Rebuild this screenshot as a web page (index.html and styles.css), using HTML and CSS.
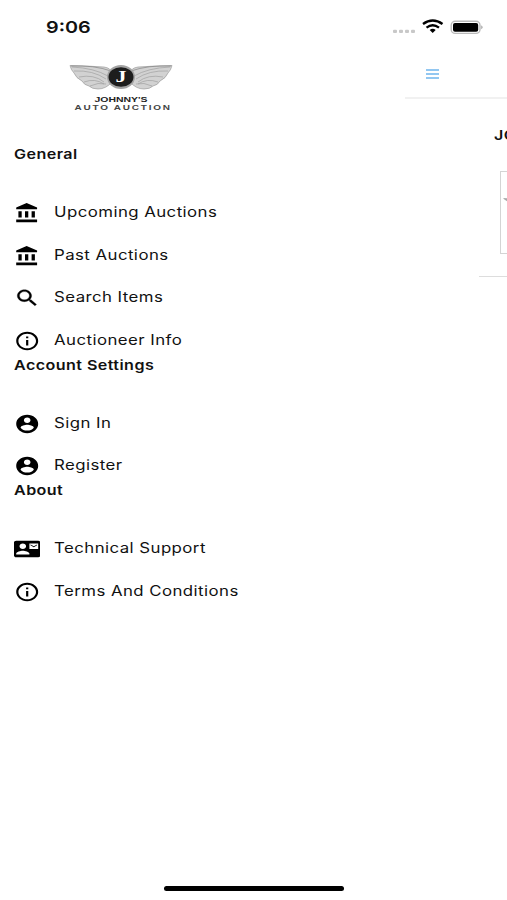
FILE: index.html
```html
<!DOCTYPE html>
<html lang="en">
<head>
<meta charset="utf-8">
<title>Johnny's Auto Auction</title>
<link rel="stylesheet" href="styles.css">
</head>
<body>
<svg class="defs" aria-hidden="true">
  <symbol id="bank" viewBox="0 0 24 24" preserveAspectRatio="none"><path d="M4 10v7h3v-7H4zm6 0v7h3v-7h-3zM2 22h19v-3H2v3zm14-12v7h3v-7h-3zm-4.500-9L2 6v2h19V6l-9.500-5z"/></symbol>
  <symbol id="search" viewBox="0 0 24 24" preserveAspectRatio="none"><path stroke="#000" stroke-width=".3" d="M15.500 14h-.79l-.28-.27C15.410 12.590 16 11.110 16 9.500 16 5.910 13.090 3 9.500 3S3 5.910 3 9.500 5.910 16 9.500 16c1.610 0 3.090-.59 4.230-1.570l.27.28v.79l5 4.990L20.490 19l-4.990-5zm-6 0C7.010 14 5 11.990 5 9.500S7.010 5 9.500 5 14 7.010 14 9.500 11.990 14 9.500 14z"/></symbol>
  <symbol id="info" viewBox="0 0 24 24" preserveAspectRatio="none"><path d="M11 17h2v-6h-2v6zm1-15C6.480 2 2 6.480 2 12s4.480 10 10 10 10-4.480 10-10S17.520 2 12 2zm0 18c-4.410 0-8-3.590-8-8s3.590-8 8-8 8 3.590 8 8-3.590 8-8 8zM11 9h2V7h-2v2z"/></symbol>
  <symbol id="user" viewBox="0 0 24 24" preserveAspectRatio="none"><path d="M12 2C6.480 2 2 6.480 2 12s4.480 10 10 10 10-4.480 10-10S17.520 2 12 2zm0 3c1.660 0 3 1.340 3 3s-1.340 3-3 3-3-1.340-3-3 1.340-3 3-3zm0 14.200c-2.500 0-4.710-1.280-6-3.220.03-1.990 4-3.080 6-3.080 1.990 0 5.970 1.090 6 3.080-1.290 1.940-3.500 3.220-6 3.220z"/></symbol>
  <symbol id="contact" viewBox="0 0 24 24" preserveAspectRatio="none"><path d="M21 8V7l-3 2-3-2v1l3 2 3-2zm1-5H2C.9 3 0 3.900 0 5v14c0 1.100.9 2 2 2h20c1.100 0 1.990-.9 1.990-2L24 5c0-1.100-.9-2-2-2zM8 6c1.660 0 3 1.340 3 3s-1.340 3-3 3-3-1.340-3-3 1.340-3 3-3zm6 12H2v-1c0-2 4-3.100 6-3.100s6 1.100 6 3.100v1zm8-6h-8V6h8v6z"/></symbol>
</svg>
<div class="screen">
  <header class="status">
    <span class="time">9:06</span>
    <svg class="indicators" width="92" height="18" viewBox="0 0 92 18">
      <g fill="#c8c8c8"><rect x="1" y="11.700" width="4" height="3.200" rx="1"/><rect x="7" y="11.700" width="4" height="3.200" rx="1"/><rect x="13" y="11.700" width="4" height="3.200" rx="1"/><rect x="19" y="11.700" width="4" height="3.200" rx="1"/></g>
      <g fill="none" stroke="#000" stroke-width="2.400"><path d="M31 6Q40.700 -1 50.500 6"/><path d="M34.500 9.600Q40.700 5 47 9.600"/></g>
      <path d="M37.700 12Q40.700 9.600 43.700 12L40.700 15z"/>
      <rect x="59.200" y="3.200" width="28.800" height="12.200" rx="4" fill="#fff" stroke="#bababa" stroke-width="1.400"/>
      <rect x="61" y="4.900" width="25.200" height="8.900" rx="2"/>
      <path d="M89.300 7.300q2.600 2 0 4z" fill="#999"/>
    </svg>
  </header>
  <div class="body">
    <nav class="drawer">
      <svg class="logo" width="106" height="50" viewBox="0 0 106 50">
        <g id="wing">
          <path d="M1 1.500Q20 2 35 3Q42 4 43 9V18Q37 25 29 25Q23 25 20 22Q15 21 13 17Q7 14 5 9Q2 6 1 1.500z" fill="#d2d2d2" stroke="#909090" stroke-width=".6"/>
          <g fill="none" stroke="#999" stroke-width=".6"><path d="M3 3Q25 4 39 12M5 7Q24 6 37 15M10 13Q25 10 35 18M15 18Q26 14 35 20M21 22Q29 18 37 20"/><path d="M2 2Q25 1 42 7" stroke="#777"/></g>
        </g>
        <use href="#wing" transform="translate(104 0) scale(-1 1)"/>
        <ellipse cx="52" cy="13" rx="14" ry="12" fill="#a3a3a3"/>
        <ellipse cx="52" cy="13" rx="12.500" ry="9.800" fill="#1d1d1d"/>
        <text class="mono" x="46.500" y="18.300" textLength="11" lengthAdjust="spacingAndGlyphs">J</text>
        <text class="brand" x="25.500" y="37.500" textLength="53" lengthAdjust="spacingAndGlyphs">JOHNNY'S</text>
        <text class="sub" transform="translate(5.500 46.200) scale(1.330 1)" textLength="71.800">AUTO AUCTION</text>
      </svg>
      <section>
        <h2><span>General</span></h2>
        <a class="row"><svg><use href="#bank"/></svg><span>Upcoming Auctions</span></a>
        <a class="row"><svg><use href="#bank"/></svg><span>Past Auctions</span></a>
        <a class="row"><svg><use href="#search"/></svg><span>Search Items</span></a>
        <a class="row"><svg><use href="#info"/></svg><span>Auctioneer Info</span></a>
      </section>
      <section>
        <h2><span>Account Settings</span></h2>
        <a class="row"><svg><use href="#user"/></svg><span>Sign In</span></a>
        <a class="row"><svg><use href="#user"/></svg><span>Register</span></a>
      </section>
      <section>
        <h2><span>About</span></h2>
        <a class="row"><svg><use href="#contact"/></svg><span>Technical Support</span></a>
        <a class="row"><svg><use href="#info"/></svg><span>Terms And Conditions</span></a>
      </section>
    </nav>
    <main class="page">
      <div class="toolbar"><i></i><i></i><i></i></div>
      <div class="listing">
        <h3>JOHNNY'S</h3>
        <div class="thumb"><svg width="12" height="8" viewBox="0 0 12 8"><path d="M1 1L12 2V7Q4 5 1 1z" fill="#aaa"/></svg></div>
      </div>
    </main>
  </div>
  <footer><div class="home"></div></footer>
</div>
</body>
</html>
```
FILE: styles.css
```css
* { box-sizing: border-box; }
body { margin: 0; background: #fff; color: #111; font-family: Inter, "Liberation Sans", sans-serif; }
.defs { display: none; }
.screen { width: 507px; height: 900px; overflow: hidden; display: flex; flex-direction: column; }
.status { height: 54px; padding: 18px 23px 0 46px; display: flex; justify-content: space-between; align-items: flex-start; flex: none; }
.time { font-size: 16.500px; line-height: 19px; font-weight: 600; transform: scaleX(1.2); transform-origin: left; }
.body { flex: 1; display: flex; min-height: 0; }
.drawer { width: 405px; flex: none; padding: 10px 13.500px 0; }
.logo { display: block; margin: 0 0 30px 55.500px; }
.mono { font: bold 16px "Liberation Serif", serif; fill: #fff; }
.brand { font: bold 8px "Liberation Sans", sans-serif; fill: #222; }
.sub { font: bold 7.500px "Liberation Sans", sans-serif; fill: #444; }
h2 { margin: 0; height: 40px; font-size: 13.400px; line-height: 20px; font-weight: 600; letter-spacing: .37px; }
h2 span, .row span { display: inline-block; white-space: nowrap; transform: scaleX(1.2); transform-origin: left; }
.row { height: 42.667px; padding-bottom: 2.600px; display: flex; align-items: flex-end; gap: 14.300px; }
.row svg { width: 26.400px; height: 22px; flex: none; }
.row span { font-size: 14px; line-height: 20px; margin-bottom: 2px; letter-spacing: .37px; }
.page { width: 102px; flex: none; overflow: hidden; }
.toolbar { height: 45px; border-bottom: 2px solid #f1f1f1; padding: 15px 0 0 21px; display: flex; flex-direction: column; gap: 2px; }
.toolbar i { width: 13px; height: 2px; background: #92c7f1; }
.listing { margin-left: 74px; height: 178px; padding-top: 26px; border-bottom: 1px solid #ddd; }
h3 { margin: 0 0 26px 15px; font-size: 13.400px; line-height: 20px; font-weight: 600; letter-spacing: .3px; transform: scaleX(1.2); transform-origin: left; }
.thumb { width: 102px; height: 83px; margin-left: 21px; border: 1px solid #d4d4d4; padding-top: 25px; }
.thumb svg { display: block; margin-left: 1px; }
footer { height: 15px; flex: none; }
.home { width: 180px; height: 5px; margin: 1px 0 0 164px; border-radius: 3px; background: #000; }
```
